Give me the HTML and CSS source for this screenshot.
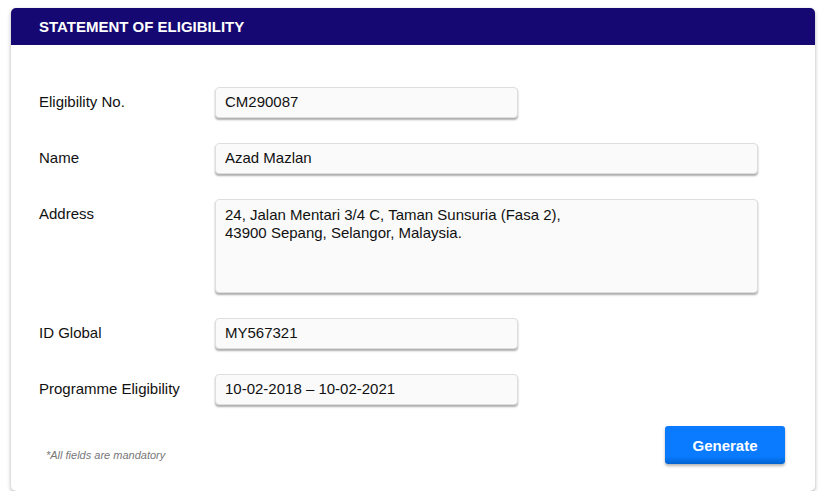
FILE: index.html
```html
<!DOCTYPE html>
<html lang="en">
<head>
<meta charset="utf-8">
<title>Statement of Eligibility</title>
<link rel="stylesheet" href="styles.css">
</head>
<body>
<section class="card">
  <header class="card-header">STATEMENT OF ELIGIBILITY</header>
  <div class="card-body">
    <div class="form">
      <div class="label">Eligibility No.</div>
      <div class="field short">CM290087</div>

      <div class="label">Name</div>
      <div class="field long">Azad Mazlan</div>

      <div class="label">Address</div>
      <div class="field long area">24, Jalan Mentari 3/4 C, Taman Sunsuria (Fasa 2),<br>43900 Sepang, Selangor, Malaysia.</div>

      <div class="label">ID Global</div>
      <div class="field short">MY567321</div>

      <div class="label">Programme Eligibility</div>
      <div class="field short">10-02-2018 – 10-02-2021</div>
    </div>
    <div class="footer">
      <p class="note">*All fields are mandatory</p>
      <button class="btn" type="button">Generate</button>
    </div>
  </div>
</section>
</body>
</html>
```
FILE: styles.css
```css
html, body {
  margin: 0;
  padding: 0;
  background: #ffffff;
}
body {
  font-family: "Liberation Sans", Arial, sans-serif;
  color: #111;
  padding: 8px 14px 0 11px;
}
.card {
  width: 804px;
  background: #fff;
  border-radius: 5px;
  box-shadow: 0 2px 4px rgba(0, 0, 0, 0.28), 0 0 1px rgba(0, 0, 0, 0.12);
  overflow: hidden;
}
.card-header {
  background: #150872;
  color: #fff;
  font-weight: bold;
  font-size: 15px;
  height: 37px;
  line-height: 38px;
  padding-left: 28px;
}
.card-body {
  padding: 42px 30px 27px 28px;
}
.form {
  display: grid;
  grid-template-columns: 176px 1fr;
  row-gap: 25px;
  align-items: start;
}
.label {
  font-size: 15px;
  line-height: 18px;
  padding-top: 6px;
}
.field {
  box-sizing: border-box;
  height: 31px;
  background: #fafafa;
  border: 1px solid #dedede;
  border-radius: 4px;
  box-shadow: 0 2px 2px rgba(0, 0, 0, 0.32);
  font-size: 15px;
  line-height: 18px;
  padding: 5px 9px;
}
.field.short { width: 303px; }
.field.long { width: 543px; }
.field.area {
  height: 94px;
  line-height: 18px;
  padding-top: 6px;
}
.footer {
  display: flex;
  justify-content: space-between;
  align-items: flex-end;
  margin-top: 21px;
}
.note {
  margin: 0 0 3px 7px;
  font-size: 11px;
  font-style: italic;
  color: #777;
}
.btn {
  width: 120px;
  height: 38px;
  border: none;
  border-radius: 3px;
  background: linear-gradient(#0a7bff 0%, #0a7bff 80%, #0063d0 100%);
  color: #fff;
  font-family: "Liberation Sans", Arial, sans-serif;
  font-weight: bold;
  font-size: 15px;
  box-shadow: 0 2px 3px rgba(0, 0, 0, 0.3);
  cursor: pointer;
}
```
